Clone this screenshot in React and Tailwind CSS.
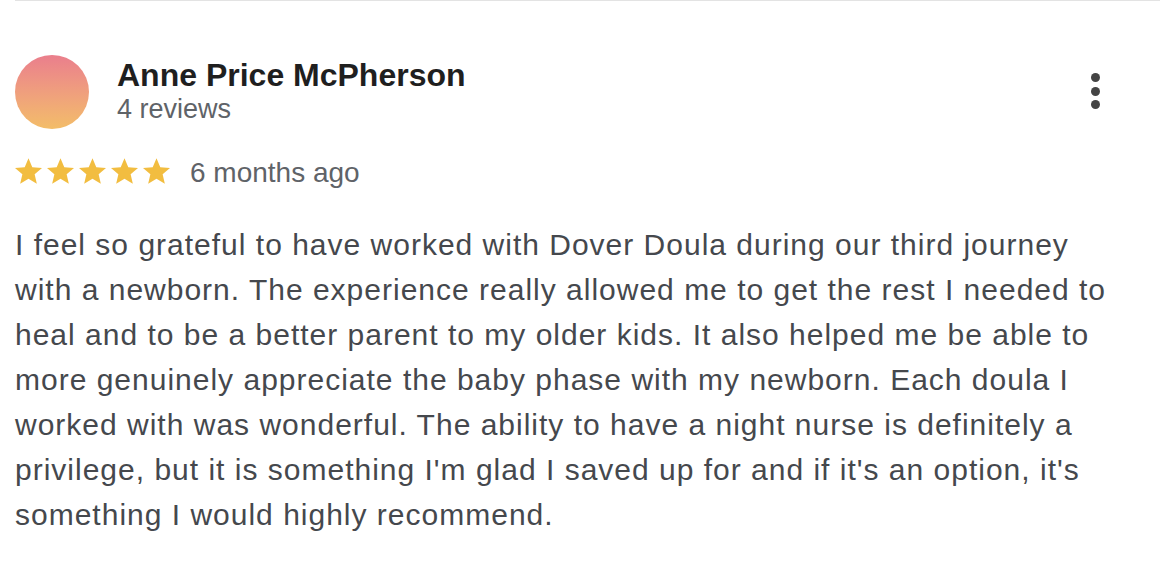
const lines = [
  "I feel so grateful to have worked with Dover Doula during our third journey",
  "with a newborn. The experience really allowed me to get the rest I needed to",
  "heal and to be a better parent to my older kids. It also helped me be able to",
  "more genuinely appreciate the baby phase with my newborn. Each doula I",
  "worked with was wonderful. The ability to have a night nurse is definitely a",
  "privilege, but it is something I'm glad I saved up for and if it's an option, it's",
  "something I would highly recommend.",
];

export default function App() {
  return (
    <div className="w-[1174px] h-[588px] bg-white overflow-hidden" style={{ fontFamily: '"Liberation Sans", Arial, sans-serif' }}>
      <div className="ml-[15px] w-[1145px] border-t border-[#e3e3e3]" />
      <div className="pl-[15px] pt-[54px]">
        <div className="flex items-start">
          <div className="w-[74px] h-[74px] rounded-full bg-gradient-to-b from-[#ea7e8c] to-[#f3bd68] shrink-0" />
          <div className="ml-[28px] flex-1 pt-[2px]">
            <div className="text-[32px] leading-[36px] font-bold text-[#1f1f1f]">Anne Price McPherson</div>
            <div className="text-[27px] leading-[33px] text-[#5f6368]">4 reviews</div>
          </div>
          <div className="flex flex-col gap-[4.5px] mt-[18px] mr-[74px]">
            <div className="w-[9px] h-[9px] rounded-full bg-[#444]" />
            <div className="w-[9px] h-[9px] rounded-full bg-[#444]" />
            <div className="w-[9px] h-[9px] rounded-full bg-[#444]" />
          </div>
        </div>
        <div className="flex items-center mt-[26px] h-[32px]">
          <div className="flex gap-[5px]">
            {[0, 1, 2, 3, 4].map((i) => (
              <svg key={i} width="27" height="26" viewBox="2 2 20 19">
                <path fill="#f2bd40" d="M12 17.27L18.18 21l-1.64-7.03L22 9.24l-7.19-.61L12 2 9.19 8.63 2 9.24l5.46 4.73L5.82 21z" />
              </svg>
            ))}
          </div>
          <div className="ml-[20px] text-[28px] leading-[32px] text-[#5f6368] pt-[3px]">6 months ago</div>
        </div>
        <p className="mt-[35px] text-[30px] leading-[45px] tracking-[1px] text-[#45484d]">
          {lines.map((l, i) => (
            <span key={i} className="block whitespace-nowrap">{l}</span>
          ))}
        </p>
      </div>
    </div>
  );
}
